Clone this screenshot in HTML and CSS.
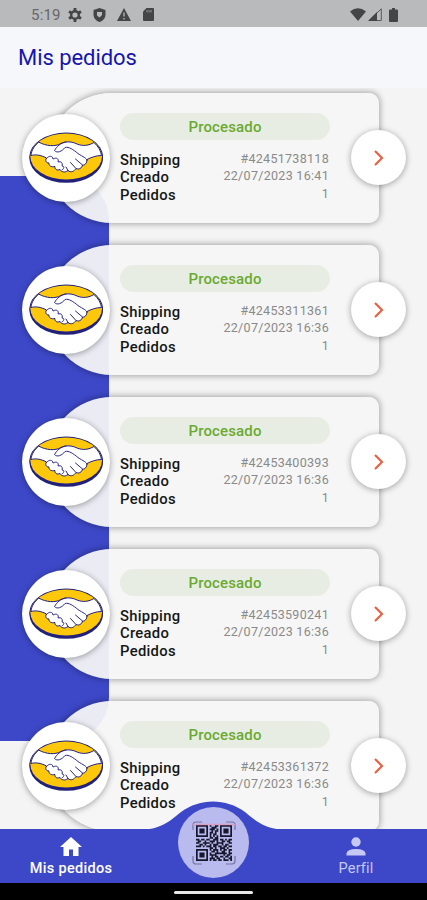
FILE: index.html
```html
<!DOCTYPE html>
<html lang="es">
<head>
<meta charset="utf-8">
<title>Mis pedidos</title>
<link rel="stylesheet" href="styles.css">
</head>
<body>
<svg class="defs" aria-hidden="true">
  <symbol id="handshake" viewBox="0 0 75 52">
    <ellipse cx="37.200" cy="26.500" rx="36.800" ry="24.300" fill="#22217c"/>
    <ellipse cx="37.200" cy="24.600" rx="36.800" ry="24" fill="#22217c"/>
    <ellipse cx="37.200" cy="24.600" rx="35.800" ry="23" fill="#fdc70c"/>
    <path d="M9.800 10.200C17 14 26 15 32 11.500C37 9 43 9.500 48 12C54 14.500 60 13.500 65 10.500C69 14 72 19 72.500 23.500C67 23.500 62 25.500 58 27.500C58 31 56 33.500 53.500 33C53 36 50 38 47 36.500C45 39.500 42 41 39 38.500C36 41 32 40 31 37.500C28 39 25.500 37 26 34.500C22 35.500 19.500 33.500 20 31C17 31 16 28.500 17.500 26C13 23.500 7 22 2 23.500C2.500 18 5.500 13.500 9.800 10.200Z" fill="#fff" stroke="#22217c" stroke-width="1"/>
    <path d="M37 10C31 11 28 14.500 25.500 18.500C28 21.500 33 19.500 36 15.500C40 14.500 44 17.500 49 21.500C54 25 58 26 58 28.500M17.500 26.500C20 23 24 24 24 27C28 25 30 27 29 30C32 29 34 31 33 34C36 34 35 37 33 38M53.500 33L46.500 27M47 36.500L41.500 30.500M39 38.500L37 35" fill="none" stroke="#22217c" stroke-width=".95" stroke-linecap="round" stroke-linejoin="round"/>
  </symbol>
</svg>
<div class="phone">
  <div class="status">
    <span class="time">5:19</span>
    <svg class="gear" width="14" height="14" viewBox="0 0 14 14"><circle cx="7" cy="7" r="3.800" fill="none" stroke="#444547" stroke-width="2.400"/><path d="M7 0v3M7 11v3M1 3.500l2.500 1.500M10.500 9l2.500 1.500M1 10.500L3.500 9M10.500 5L13 3.500" stroke="#444547" stroke-width="2.800"/></svg>
    <svg class="shield" width="13" height="14" viewBox="0 0 13 14"><path d="M6.500 0L12.500 2V6.500C12.500 10 10 13 6.500 14C3 13 .5 10 .5 6.500V2Z" fill="#444547"/><path d="M4 4h5v3L6.500 9.500 4 7.500Z" fill="#b9babc"/></svg>
    <svg class="warn" width="14" height="13" viewBox="0 0 14 13"><path d="M7 0L14 13H0Z" fill="#444547"/><path d="M7 4.500v4M7 10v1.500" stroke="#b9babc" stroke-width="1.300"/></svg>
    <svg class="card-icon" width="11" height="13" viewBox="0 0 11 13"><path d="M3.500 0H10q1 0 1 1V12q0 1-1 1H1q-1 0-1-1V3.500Z" fill="#444547"/><path d="M4 2v2.500M6 2v2.500M8 2v2.500" stroke="#929395"/></svg>
    <span class="grow"></span>
    <svg class="wifi" width="16" height="13" viewBox="0 0 16 13"><path d="M0 3.500Q8-3 16 3.500L8 13Z" fill="#444547"/></svg>
    <svg class="signal" width="14" height="13" viewBox="0 0 14 13"><path d="M1 12.500L13.300.8V12.500Z" fill="none" stroke="#5a5b5d"/><path d="M0 13L9 4V13Z" fill="#444547"/></svg>
    <svg class="battery" width="9" height="14" viewBox="0 0 9 14"><path d="M3 0h3v1.500h2q1 0 1 1V13q0 1-1 1H1q-1 0-1-1V2.500q0-1 1-1h2Z" fill="#444547"/></svg>
  </div>
  <header><h1>Mis pedidos</h1></header>
  <main id="orders"><div class="panel"></div></main>
  <nav>
    <svg class="bump" width="140" height="30" viewBox="0 0 140 30"><path d="M0 28.500C19 28 28 19 38 11C57-3 83-3 102 11C112 19 121 28 140 28.500V30H0Z" fill="#3d48c8"/></svg>
    <a class="tab active"><svg width="22" height="19" viewBox="0 0 22 19"><path d="M11 0L22 10H18.500V19H13V12.500H9V19H3.500V10H0Z" fill="#fff"/></svg><span>Mis pedidos</span></a>
    <a class="scan"><svg width="44" height="44" viewBox="0 0 44 44">
      <path d="M1 9V4q0-3 3-3h6M34 1h6q3 0 3 3v5M43 35v5q0 3-3 3h-6M10 43H4q-3 0-3-3v-5" fill="none" stroke="#77749e" stroke-width="1.200"/>
      <path id="qr" transform="translate(4 4) scale(1.714)" fill="#17172d"/>
      <path d="M1 3.500H43" stroke="#d9a0c5" stroke-width="1.600"/>
    </svg></a>
    <a class="tab"><svg width="20" height="19" viewBox="0 0 20 19"><circle cx="10" cy="5" r="4.700" fill="#c6c9f3"/><path d="M.5 18.500V16.500Q1 12 10 12T19.500 16.500V18.500Z" fill="#c6c9f3"/></svg><span>Perfil</span></a>
  </nav>
  <div class="gesture"><i></i></div>
</div>
<script src="app.js"></script>
</body>
</html>
```
FILE: styles.css
```css
* { box-sizing: border-box; }
body { margin: 0; font-family: Roboto, "Liberation Sans", sans-serif; }
.defs { position: absolute; width: 0; height: 0; }
.phone { width: 427px; height: 900px; display: flex; flex-direction: column; overflow: hidden; background: #f4f4f4; }
.status { height: 27px; flex: none; display: flex; align-items: center; padding: 2px 29px 0 31px; background: #b9babc; color: #66676a; }
.time { width: 37px; font-size: 15px; letter-spacing: .2px; }
.shield { margin-left: 11px; }
.warn { margin-left: 11px; }
.card-icon { margin-left: 12px; }
.grow { flex: 1; }
.signal { margin-left: 2px; }
.battery { margin-left: 7px; }
header { height: 61px; flex: none; padding: 0 18px; background: #f5f7fa; }
h1 { margin: 0; font-size: 22px; line-height: 62px; font-weight: 400; letter-spacing: -.05px; color: #1715ad; }
main { height: 741px; flex: none; position: relative; overflow: hidden; padding: 5px 48px 0 47px; display: flex; flex-direction: column; gap: 22px; }
.panel { position: absolute; left: 0; top: 88px; width: 109px; height: 565px; border-radius: 0 44px 44px 0; background: #3d48c8; }
.order { position: relative; flex: none; height: 130px; padding: 20px 49px 0 73px; border-radius: 65px 10px 10px 65px; background: rgba(245, 245, 245, .94); box-shadow: 0 0 6px 1px rgba(0, 0, 0, .33); }
.avatar, .go { position: absolute; display: flex; align-items: center; justify-content: center; border-radius: 50%; background: #fff; box-shadow: 0 1px 6px rgba(0, 0, 0, .36); }
.avatar { width: 88px; height: 88px; left: -25px; top: 21px; }
.go { width: 55px; height: 55px; right: -27px; top: 37px; }
.state { height: 27px; border-radius: 14px; background: #e8ede3; color: #6baa32; text-align: center; font-size: 15px; font-weight: 500; line-height: 28px; letter-spacing: .15px; }
dl { margin: 12px 0 0; }
.row { display: flex; justify-content: space-between; height: 17.4px; padding-right: 1px; }
dt { font-size: 14.8px; font-weight: 500; line-height: 16px; letter-spacing: .3px; color: #161616; }
dd { margin: 0; font-size: 12.5px; line-height: 13px; letter-spacing: .3px; color: #8a8a8a; }
nav { position: relative; flex: none; height: 54px; display: flex; justify-content: space-between; background: #3d48c8; }
.bump { position: absolute; left: 143px; top: -28px; }
.scan { position: absolute; left: 178px; top: -22px; width: 71px; height: 71px; border-radius: 50%; background: #b9baed; display: flex; align-items: center; justify-content: center; }
.tab { width: 142px; display: flex; flex-direction: column; align-items: center; padding-top: 8px; color: #c6c9f3; font-size: 14.5px; line-height: 20px; letter-spacing: .15px; }
.tab span { margin-top: 3px; }
.active { color: #fff; font-weight: 500; letter-spacing: .3px; }
.gesture { flex: 1; background: #000; display: flex; justify-content: center; padding-top: 8px; }
.gesture i { width: 79px; height: 3px; border-radius: 2px; background: #e8e8e8; }
```
FILE: app.js
```js
const orders = [
  ["#42451738118", "22/07/2023 16:41"],
  ["#42453311361", "22/07/2023 16:36"],
  ["#42453400393", "22/07/2023 16:36"],
  ["#42453590241", "22/07/2023 16:36"],
  ["#42453361372", "22/07/2023 16:36"]
];
const list = document.getElementById("orders");
orders.forEach(([shipping, created]) => {
  list.insertAdjacentHTML("beforeend", `
    <article class="order">
      <div class="avatar"><svg width="75" height="52"><use href="#handshake"/></svg></div>
      <div class="state">Procesado</div>
      <dl>
        <div class="row"><dt>Shipping</dt><dd>${shipping}</dd></div>
        <div class="row"><dt>Creado</dt><dd>${created}</dd></div>
        <div class="row"><dt>Pedidos</dt><dd>1</dd></div>
      </dl>
      <div class="go"><svg width="10" height="16" viewBox="0 0 10 16"><path d="M1 1L8 8L1 15" fill="none" stroke="#f0593a" stroke-width="2"/></svg></div>
    </article>`);
});

const modules = [
  "111111101001101111111",
  "100000100111001000001",
  "101110101110101011101",
  "101110100101101011101",
  "101110101101001011101",
  "100000101011001000001",
  "111111101010101111111",
  "000000001101100000000",
  "110110110011101101011",
  "011001001110100110110",
  "110011110100111100011",
  "001101001011100101100",
  "111010111011011011011",
  "000000001101001110100",
  "111111101011101011011",
  "100000100110100110010",
  "101110101001111111011",
  "101110101111000010110",
  "101110100101101101101",
  "100000101110110010011",
  "111111101011011011101"
];
let d = "";
modules.forEach((row, y) => [...row].forEach((bit, x) => {
  if (bit === "1") d += `M${x} ${y}h1v1h-1z`;
}));
document.getElementById("qr").setAttribute("d", d);
```
